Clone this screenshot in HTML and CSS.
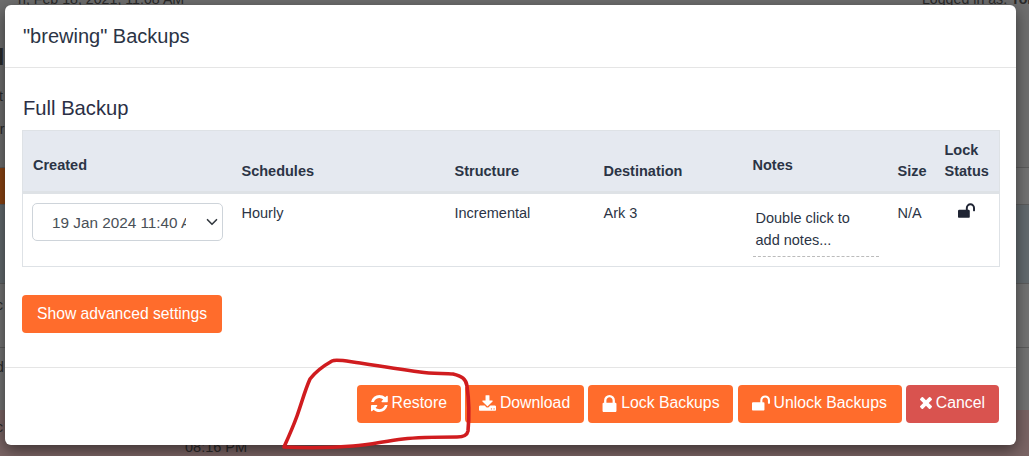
FILE: index.html
```html
<!DOCTYPE html>
<html lang="en">
<head>
<meta charset="utf-8">
<title>"brewing" Backups</title>
<link rel="stylesheet" href="styles.css">
</head>
<body>
<div class="page">
  <div class="band band-top">
    <div class="page-top">
      <span>n, Feb 18, 2021, 11:08 AM</span>
      <span class="login">Logged in as: <b>Tom</b></span>
    </div>
    <div class="page-heading">H</div>
    <div class="page-line">st</div>
    <div class="page-line">or</div>
  </div>
  <div class="band band-accent"><div class="page-mark"></div></div>
  <div class="band band-blue"></div>
  <div class="band band-plain"><span class="page-letter">c</span></div>
  <div class="band band-plain2"><span class="page-letter">d</span></div>
  <div class="band band-red"><span class="page-letter">c</span><span class="page-time">08:16 PM</span></div>
</div>

<div class="modal">
  <header class="modal-header">
    <h4 class="modal-title">"brewing" Backups</h4>
  </header>
  <div class="modal-body">
    <h5 class="section-title">Full Backup</h5>
    <table class="backups">
      <colgroup>
        <col class="c-created"><col class="c-sched"><col class="c-struct"><col class="c-dest"><col class="c-notes"><col class="c-size"><col class="c-lock">
      </colgroup>
      <thead>
        <tr>
          <th class="raised">Created</th>
          <th>Schedules</th>
          <th>Structure</th>
          <th>Destination</th>
          <th class="raised">Notes</th>
          <th>Size</th>
          <th>Lock Status</th>
        </tr>
      </thead>
      <tbody>
        <tr>
          <td>
            <div class="select-wrap">
              <select class="select"><option>19 Jan 2024 11:40 AM</option></select>
              <svg class="chevron" viewBox="0 0 16 16"><path d="M2 5l6 6 6-6" fill="none" stroke="#343a40" stroke-width="2.200" stroke-linecap="round" stroke-linejoin="round"/></svg>
            </div>
          </td>
          <td>Hourly</td>
          <td>Incremental</td>
          <td>Ark 3</td>
          <td class="notes-cell"><div class="notes">Double click to add notes...</div></td>
          <td>N/A</td>
          <td class="lock-cell">
            <svg class="icon dark" viewBox="0 128 1664 1408" width="17" height="15"><path d="M1664 576v256q0 26-19 45t-45 19h-64q-26 0-45-19t-19-45V576q0-106-75-181t-181-75-181 75-75 181v192h96q40 0 68 28t28 68v576q0 40-28 68t-68 28H96q-40 0-68-28t-28-68V864q0-40 28-68t68-28h672V576q0-185 131.500-316.500T1216 128t316.500 131.500T1664 576z"/></svg>
          </td>
        </tr>
      </tbody>
    </table>
    <button class="btn orange btn-advanced">Show advanced settings</button>
  </div>
  <footer class="modal-footer">
    <button class="btn orange btn-foot">
      <svg class="icon" viewBox="18 108 1518 1556" width="17" height="17"><path d="M1511 1056q0 5-1 7-64 268-268 434.500T764 1664q-146 0-282.500-55T238 1452l-129 129q-19 19-45 19t-45-19-19-45v-448q0-26 19-45t45-19h448q26 0 45 19t19 45-19 45L420 1270q71 66 161 102t187 36q134 0 250-65t186-179q11-17 53-117 8-23 30-23h192q13 0 22.500 9.500t9.500 22.500zM1536 256v448q0 26-19 45t-45 19h-448q-26 0-45-19t-19-45 19-45l138-138q-148-137-349-137-134 0-250 65T332 608q-11 17-53 117-8 23-30 23H50q-13 0-22.500-9.500T18 716v-7q65-268 270-434.500T768 108q146 0 284 55.500T1297 320l130-129q19-19 45-19t45 19 19 45z"/></svg>
      Restore
    </button>
    <button class="btn orange btn-foot">
      <svg class="icon" viewBox="0 0 1664 1536" width="17" height="16"><path d="M1280 1344q0-26-19-45t-45-19-45 19-19 45 19 45 45 19 45-19 19-45zm256 0q0-26-19-45t-45-19-45 19-19 45 19 45 45 19 45-19 19-45zm128-224v320q0 40-28 68t-68 28H96q-40 0-68-28t-28-68v-320q0-40 28-68t68-28h465l135 136q58 56 136 56t136-56l136-136h464q40 0 68 28t28 68zm-325-569q17 41-14 70l-448 448q-18 19-45 19t-45-19L339 621q-31-29-14-70 17-39 59-39h256V64q0-26 19-45t45-19h256q26 0 45 19t19 45v448h256q42 0 59 39z"/></svg>
      Download
    </button>
    <button class="btn orange btn-foot btn-lock">
      <svg class="icon" viewBox="0 128 1152 1408" width="15" height="17"><path d="M320 768h512V576q0-106-75-181t-181-75-181 75-75 181v192zm832 96v576q0 40-28 68t-68 28H96q-40 0-68-28t-28-68V864q0-40 28-68t68-28h32V576q0-184 132-316t316-132 316 132 132 316v192h32q40 0 68 28t28 68z"/></svg>
      Lock Backups
    </button>
    <button class="btn orange btn-foot btn-unlock">
      <svg class="icon" viewBox="0 128 1664 1408" width="18" height="16"><path d="M1664 576v256q0 26-19 45t-45 19h-64q-26 0-45-19t-19-45V576q0-106-75-181t-181-75-181 75-75 181v192h96q40 0 68 28t28 68v576q0 40-28 68t-68 28H96q-40 0-68-28t-28-68V864q0-40 28-68t68-28h672V576q0-185 131.500-316.500T1216 128t316.500 131.500T1664 576z"/></svg>
      Unlock Backups
    </button>
    <button class="btn red btn-foot">
      <svg class="icon" viewBox="110 258 1188 1188" width="12" height="12"><path d="M1298 1214q0 40-28 68l-136 136q-28 28-68 28t-68-28L704 1124l-294 294q-28 28-68 28t-68-28L138 1282q-28-28-28-68t28-68l294-294-294-294q-28-28-28-68t28-68l136-136q28-28 68-28t68 28l294 294 294-294q28-28 68-28t68 28l136 136q28 28 28 68t-28 68L976 852l294 294q28 28 28 68z"/></svg>
      Cancel
    </button>
  </footer>
</div>

<svg class="scribble" viewBox="0 0 1029 456" width="1029" height="456">
  <path d="M332 361 C336 359 345 361 360 363 C385 367 405 370 420 372 C432 374 445 373 453 374 C462 376 466 379 467 386 C469 400 469 420 468 431 C467 436 462 437 457 437 C435 437 420 437 403 439 C385 441 370 445 353 446 C330 448 305 448 284 447 C289 436 293 427 297 416 C302 402 305 390 310 379 C316 371 325 365 332 361 Z" fill="none" stroke="#d01c1f" stroke-width="3.600" stroke-linejoin="round" stroke-linecap="round"/>
</svg>
</body>
</html>
```
FILE: styles.css
```css
* { box-sizing: border-box; }
html, body { margin: 0; height: 100%; }
body {
  width: 1029px;
  height: 456px;
  overflow: hidden;
  font-family: "Liberation Sans", Arial, sans-serif;
  font-size: 15px;
  color: #2b3445;
  position: relative;
}

/* dimmed page behind the dialog */
.page {
  height: 456px;
  background: #737373;
  display: flex;
  flex-direction: column;
  color: #2a2a2a;
  overflow: hidden;
}
.band { flex: none; }
.band-top { height: 167px; background: #6e6e6e; }
.band-accent { height: 37px; border-top: 1px solid #5c5c5c; background: #737373; }
.band-blue { height: 79px; border-top: 1px solid #5c5c5c; background: #636a6e; }
.band-plain { height: 64px; border-top: 1px solid #5c5c5c; padding-top: 12px; }
.band-plain2 { height: 63px; border-top: 1px solid #5c5c5c; padding-top: 10px; }
.band-red { height: 46px; background: #7a6464; padding-top: 8px; position: relative; }
.page-top {
  display: flex;
  justify-content: space-between;
  margin-top: -9px;
  padding-left: 18px;
  font-size: 14.200px;
  white-space: nowrap;
}
.login { margin-right: -11px; }
.page-heading {
  margin: 35px 0 0 -13px;
  font-size: 24px;
  font-weight: 700;
  line-height: 30px;
}
.page-line {
  margin: 0 0 0 -8px;
  font-size: 14px;
  line-height: 17px;
  padding-top: 16px;
}
.page-mark {
  width: 8px;
  height: 37px;
  background: #8c4413;
}
.page-letter { margin-left: -4px; font-size: 14px; }
.page-time {
  position: absolute;
  left: 185px;
  top: 29px;
  font-size: 14.500px;
}

/* dialog */
.modal {
  position: absolute;
  left: 5px;
  top: 5px;
  width: 1011px;
  height: 440px;
  background: #fff;
  border-radius: 6px;
  box-shadow: 0 5px 15px rgba(0, 0, 0, .5);
  display: flex;
  flex-direction: column;
}
.modal-header {
  height: 63px;
  padding: 0 18px;
  border-bottom: 1px solid #e5e5e5;
  display: flex;
  align-items: center;
}
.modal-title {
  margin: 0;
  font-size: 20px;
  font-weight: 400;
  color: #2b3445;
}
.modal-body {
  flex: 1;
  padding: 29px 17px 0;
}
.section-title {
  margin: 0 0 10px 1px;
  font-size: 20.200px;
  line-height: 23px;
  font-weight: 400;
  color: #2b2f45;
}
.backups {
  width: 977px;
  table-layout: fixed;
  border-collapse: collapse;
  border: 1px solid #dee2e6;
  margin-bottom: 28px;
}
.c-created { width: 209px; }
.c-sched { width: 213px; }
.c-struct { width: 149px; }
.c-dest { width: 149px; }
.c-notes { width: 145px; }
.c-size { width: 47px; }
.c-lock { width: 65px; }
.backups th {
  background: #e5e9f0;
  text-align: left;
  vertical-align: bottom;
  font-size: 14.500px;
  line-height: 21px;
  font-weight: 700;
  padding: 9px 10px 9px;
  border-bottom: 3px solid #dee2e6;
}
.backups th.raised { padding-bottom: 15px; }
.backups td {
  vertical-align: top;
  font-size: 14.500px;
  line-height: 21px;
  padding: 9px 10px;
  height: 71px;
}
.select-wrap { position: relative; width: 191px; margin-left: -1px; }
.select {
  display: block;
  width: 100%;
  height: 38px;
  appearance: none;
  -webkit-appearance: none;
  background: #fff;
  border: 1px solid #ced4da;
  border-radius: 5px;
  padding: 0 36px 0 19px;
  font: 15.300px "Liberation Sans", Arial, sans-serif;
  color: #495057;
}
.chevron {
  position: absolute;
  right: 5px;
  top: 13px;
  width: 12px;
  height: 12px;
  pointer-events: none;
}
.notes {
  width: 126px;
  padding: 4px 3px 5px 3px;
  border-bottom: 1px dashed #bbb;
  line-height: 22px;
  font-size: 14.500px;
}
.lock-cell { text-align: center; }
.icon { fill: #fff; flex: none; }
.icon.dark { fill: #1f2433; }

.btn {
  height: 38px;
  border: 1px solid transparent;
  border-radius: 4px;
  color: #fff;
  font: 15.800px "Liberation Sans", Arial, sans-serif;
  padding: 0 14px;
  display: inline-flex;
  align-items: center;
  gap: 4px;
  white-space: nowrap;
}
.btn-advanced { font-size: 15.700px; }
.btn-foot { padding: 0 13px 2px; }
.btn-lock { padding-right: 12px; }
.btn-unlock { margin-left: 1px; padding-right: 14px; }
.orange { background: #ff6c2c; }
.red { background: #d9534f; }

.modal-footer {
  height: 78px;
  border-top: 1px solid #e5e5e5;
  padding: 17px 17px 0 0;
  display: flex;
  justify-content: flex-end;
  gap: 4px;
}
.scribble {
  position: absolute;
  left: 0;
  top: 0;
  pointer-events: none;
}
```
